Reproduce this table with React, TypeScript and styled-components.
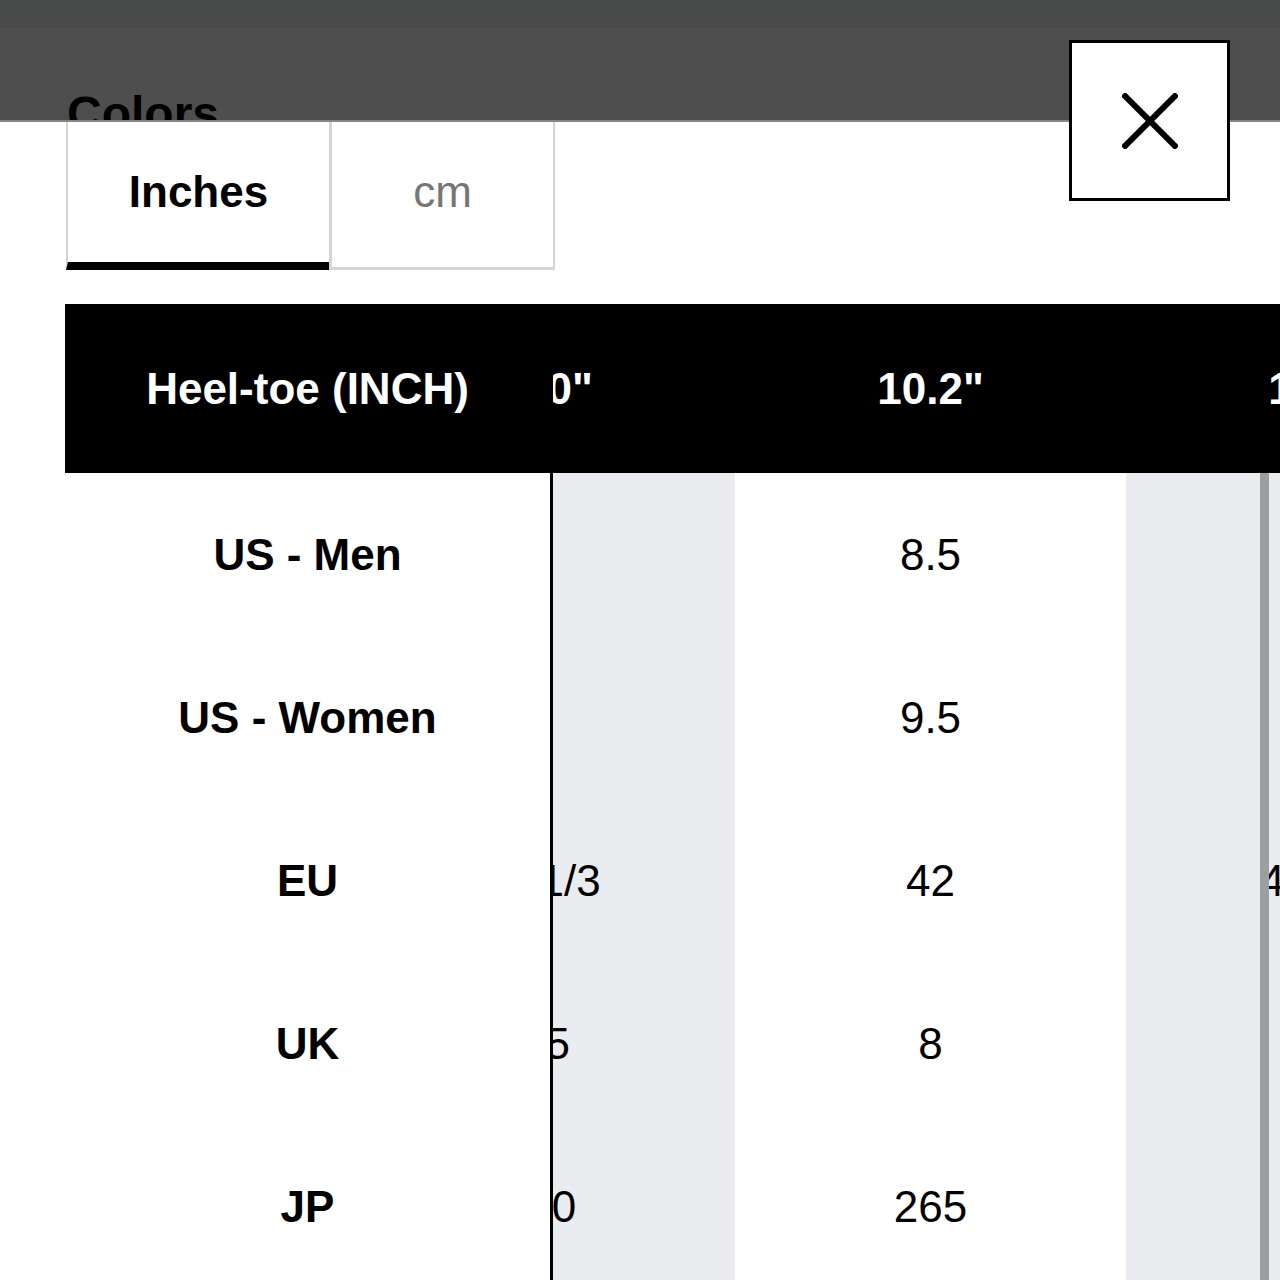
import React, { useLayoutEffect, useRef } from 'react';
import styled, { createGlobalStyle } from 'styled-components';

const Global = createGlobalStyle`
  html, body { margin: 0; padding: 0; background: #fff; }
  body { font-family: "Liberation Sans", Arial, sans-serif; overflow: hidden; }
  * { box-sizing: border-box; }
`;

const Page = styled.div`
  position: relative;
  width: 1280px;
  height: 1280px;
  overflow: hidden;
  background: #fff;
`;

const TopBar = styled.header`
  height: 122px;
  background: #4e4e4e;
  border-bottom: 2px solid #858585;
  overflow: hidden;
`;

const StatusStrip = styled.div`
  height: 28px;
  background: #494a4a;
`;

const Heading = styled.h2`
  margin: 62px 0 0 67px;
  font-size: 48px;
  line-height: 48px;
  font-weight: 700;
  color: #000;
`;

const CloseButton = styled.button`
  position: absolute;
  top: 40px;
  right: 50px;
  width: 161px;
  height: 161px;
  border: 3px solid #000;
  background: #fff;
  padding: 0;
  display: flex;
  align-items: center;
  justify-content: center;
  cursor: pointer;
`;

const Tabs = styled.div`
  display: flex;
  margin-left: 66px;
  height: 148px;
`;

const Tab = styled.button<{ $active?: boolean; $w: number }>`
  width: ${(p) => p.$w}px;
  height: 100%;
  background: #fff;
  padding: 48px 0 0;
  display: flex;
  justify-content: center;
  align-items: flex-start;
  font-family: "Liberation Sans", Arial, sans-serif;
  font-size: 44px;
  line-height: 44px;
  font-weight: ${(p) => (p.$active ? 700 : 400)};
  color: ${(p) => (p.$active ? '#000' : '#767676')};
  border-style: solid;
  border-top-width: 0;
  border-color: #d4d4d4;
  border-left-width: ${(p) => (p.$active ? '2px' : '3px')};
  border-right-width: ${(p) => (p.$active ? '0' : '2px')};
  border-bottom-width: ${(p) => (p.$active ? '8px' : '3px')};
  border-bottom-color: ${(p) => (p.$active ? '#000' : '#d4d4d4')};
  cursor: pointer;
`;

const Table = styled.div`
  display: flex;
  margin: 34px 0 0 65px;
`;

const FixedColumn = styled.div`
  flex: 0 0 488px;
  border-right: 3px solid #000;
`;

const ScrollFrame = styled.div`
  position: relative;
  flex: 1 1 auto;
  min-width: 0;
`;

const ScrollArea = styled.div`
  overflow: hidden;
  width: 100%;
`;

const Track = styled.div`
  display: flex;
  width: max-content;
`;

const DataColumn = styled.div<{ $shade: boolean }>`
  flex: 0 0 391px;
  width: 391px;
  background: ${(p) => (p.$shade ? '#eaecef' : '#fff')};
`;

const HeadCell = styled.div`
  height: 169px;
  background: #000;
  color: #fff;
  font-weight: 700;
  font-size: 44px;
  display: flex;
  align-items: center;
  justify-content: center;
  white-space: nowrap;
`;

const BodyCell = styled.div<{ $label?: boolean }>`
  height: 163px;
  display: flex;
  align-items: center;
  justify-content: center;
  font-size: 44px;
  font-weight: ${(p) => (p.$label ? 700 : 400)};
  color: #000;
  white-space: nowrap;
`;

const ScrollIndicator = styled.div`
  position: absolute;
  top: 169px;
  bottom: 0;
  right: 11px;
  width: 9px;
  background: #9c9e9f;
`;

const rows = ['US - Men', 'US - Women', 'EU', 'UK', 'JP'];

const columns = [
  { h: '10.0"', v: ['8', '9', '41 1/3', '7.5', '260'] },
  { h: '10.2"', v: ['8.5', '9.5', '42', '8', '265'] },
  { h: '10.4"', v: ['9', '10', '42 2/3', '8.5', '270'] },
  { h: '10.6"', v: ['9.5', '10.5', '43 1/3', '9', '275'] },
  { h: '10.8"', v: ['10', '11', '44', '9.5', '280'] },
];

export default function App() {
  const scrollRef = useRef<HTMLDivElement>(null);
  useLayoutEffect(() => {
    if (scrollRef.current) scrollRef.current.scrollLeft = 209;
  }, []);

  return (
    <Page>
      <Global />
      <TopBar>
        <StatusStrip />
        <Heading>Colors</Heading>
      </TopBar>
      <CloseButton aria-label="Close">
        <svg width="56" height="56" viewBox="0 0 56 56">
          <path d="M1 1 L55 55 M55 1 L1 55" stroke="#000" strokeWidth="6" fill="none" />
        </svg>
      </CloseButton>
      <Tabs>
        <Tab $active $w={263}>Inches</Tab>
        <Tab $w={226}>cm</Tab>
      </Tabs>
      <Table>
        <FixedColumn>
          <HeadCell>Heel-toe (INCH)</HeadCell>
          {rows.map((r) => (
            <BodyCell key={r} $label>
              {r}
            </BodyCell>
          ))}
        </FixedColumn>
        <ScrollFrame>
          <ScrollArea ref={scrollRef}>
            <Track>
              {columns.map((c, i) => (
                <DataColumn key={c.h} $shade={i % 2 === 0}>
                  <HeadCell>{c.h}</HeadCell>
                  {c.v.map((v, j) => (
                    <BodyCell key={j}>{v}</BodyCell>
                  ))}
                </DataColumn>
              ))}
            </Track>
          </ScrollArea>
          <ScrollIndicator />
        </ScrollFrame>
      </Table>
    </Page>
  );
}
